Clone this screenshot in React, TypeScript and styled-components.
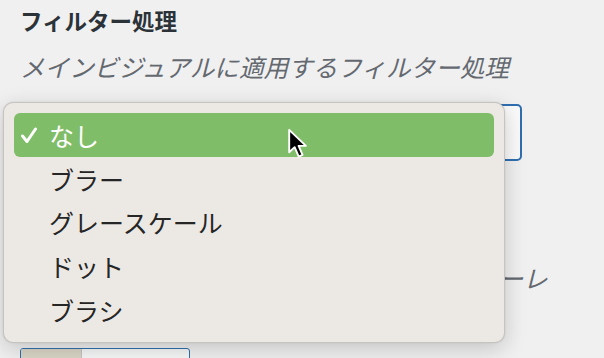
import React from 'react';
import styled, { createGlobalStyle } from 'styled-components';

const GlobalStyle = createGlobalStyle`
  html, body {
    margin: 0;
    padding: 0;
    background: #f0f0f1;
    font-family: "Noto Sans CJK JP", "Noto Sans", sans-serif;
    overflow: hidden;
  }
`;

const Page = styled.div`
  position: relative;
  width: 604px;
  height: 358px;
  padding: 4px 20px 0;
  box-sizing: border-box;
  overflow: hidden;
`;

const Field = styled.section`
  display: flex;
  flex-direction: column;
  align-items: flex-start;
`;

const Label = styled.h3`
  margin: 0;
  font-size: 22.5px;
  line-height: 32px;
  font-weight: 700;
  color: #2c3338;
`;

const Description = styled.p`
  margin: 13px 0 0;
  font-size: 24.6px;
  line-height: 34px;
  font-style: italic;
  color: #646970;
  white-space: pre;
`;

const SelectBox = styled.div`
  margin-top: 21px;
  width: 502px;
  height: 57px;
  box-sizing: border-box;
  border: 2px solid #2f6fb0;
  border-radius: 5px;
  background: #fafafa;
`;

const SecondField = styled(Field)`
  margin-top: 54px;
`;

const ColorButton = styled.div`
  margin-top: 20px;
  display: flex;
  align-items: stretch;
  width: 170px;
  height: 44px;
  box-sizing: border-box;
  border: 1px solid #2f6fb0;
  border-radius: 3px;
  overflow: hidden;
  background: #f6f7f7;
`;

const Swatch = styled.span`
  width: 60px;
  background: #d9d5c6;
  border-right: 1px solid #c3c4c7;
`;

const ButtonText = styled.span`
  padding: 8px 0 0 14px;
  font-size: 20px;
  color: #2f6fb0;
`;

const Menu = styled.ul`
  position: absolute;
  left: 3px;
  top: 102px;
  width: 502px;
  height: 241px;
  box-sizing: border-box;
  margin: 0;
  padding: 10px 10px;
  list-style: none;
  background: #ece9e5;
  border: 1px solid rgba(0, 0, 0, 0.16);
  border-radius: 10px;
  box-shadow: 0 6px 22px rgba(0, 0, 0, 0.18), 0 0 2px rgba(0, 0, 0, 0.1);
  display: flex;
  flex-direction: column;
`;

const Item = styled.li<{ $active?: boolean }>`
  position: relative;
  height: 44px;
  display: flex;
  align-items: center;
  padding-left: 35px;
  border-radius: 6px;
  font-size: 25px;
  color: ${p => (p.$active ? '#ffffff' : '#262626')};
  background: ${p => (p.$active ? '#80bd69' : 'transparent')};
`;

const Check = styled.svg`
  position: absolute;
  left: 6px;
  top: 14px;
`;

const Cursor = styled.svg`
  position: absolute;
  left: 287px;
  top: 128px;
`;

const options = ['なし', 'ブラー', 'グレースケール', 'ドット', 'ブラシ'];

const App: React.FC = () => {
  return (
    <Page>
      <GlobalStyle />
      <Field>
        <Label>フィルター処理</Label>
        <Description>メインビジュアルに適用するフィルター処理</Description>
        <SelectBox />
      </Field>

      <SecondField>
        <Label>カラーレイヤー</Label>
        <Description>
          {'メインビジュアル全体に重ねる1色目のカラーレ\nイヤーの色'}
        </Description>
        <ColorButton>
          <Swatch />
          <ButtonText>色を選択</ButtonText>
        </ColorButton>
      </SecondField>

      <Menu>
        {options.map((o, i) => (
          <Item key={o} $active={i === 0}>
            {i === 0 && (
              <Check width="18" height="17" viewBox="0 0 18 17">
                <path d="M2.5 9 L7 14.5 L15.5 2" fill="none" stroke="#fff" strokeWidth="3" strokeLinecap="round" strokeLinejoin="round" />
              </Check>
            )}
            {o}
          </Item>
        ))}
      </Menu>

      <Cursor width="22" height="31" viewBox="0 0 15 21">
        <path d="M1.5 1.2 L1.5 16.5 L5.2 13 L8 19.4 L10.6 18.3 L7.9 12.1 L12.9 12.1 Z" fill="#000" stroke="#fff" strokeWidth="1.3" strokeLinejoin="round" />
      </Cursor>
    </Page>
  );
};

export default App;
